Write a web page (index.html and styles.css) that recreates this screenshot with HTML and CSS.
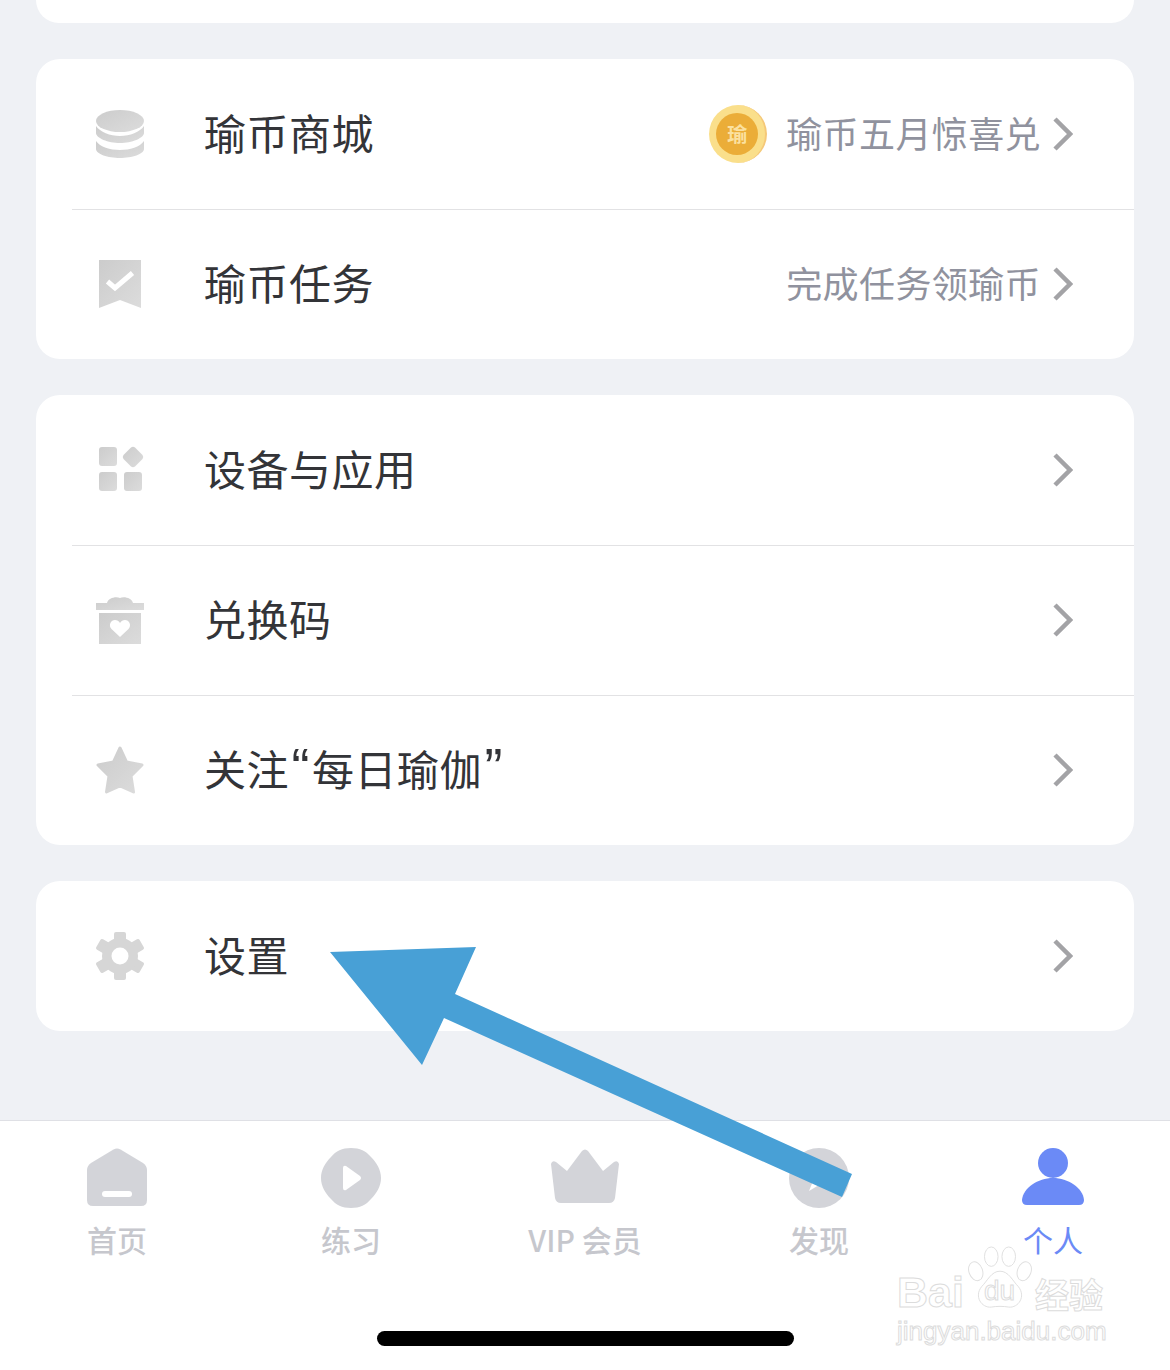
FILE: index.html
```html
<!DOCTYPE html>
<html lang="zh-CN">
<head>
    <meta charset="UTF-8">
    <meta name="viewport" content="width=device-width, initial-scale=1.0">
    <title>个人</title>
    <link rel="stylesheet" href="styles.css">
</head>
<body>
    <svg class="defs" width="0" height="0">
        <linearGradient id="iconFill" x1="0" y1="0" x2="1" y2="1">
            <stop offset="0" stop-color="#cccccc"/>
            <stop offset="1" stop-color="#dcdcdc"/>
        </linearGradient>
    </svg>

    <div class="page">
        <div class="card card-cut"></div>

        <div class="card">
            <div class="row">
                <svg class="icon" viewBox="0 0 48 48">
                    <ellipse cx="24" cy="11" rx="24" ry="11"/>
                    <path d="M0 16C4 22 14 26 24 26S44 22 48 16V23C48 28 36 33 24 33S0 28 0 23Z"/>
                    <path d="M0 31C4 37 14 40 24 40S44 37 48 31V39C48 44 36 48 24 48S0 44 0 39Z"/>
                </svg>
                <span class="label">瑜币商城</span>
                <span class="coin"><span class="coin-in">瑜</span></span>
                <span class="sub">瑜币五月惊喜兑</span>
                <svg class="arrow-r" viewBox="0 0 20 34"><path d="M2 2L17 17L2 32"/></svg>
            </div>
            <div class="row">
                <svg class="icon" viewBox="0 0 48 48">
                    <path d="M3 0H45V48L24 40L3 48Z"/>
                    <path class="cut-line" d="M11.500 21.500L19 28L36.500 13"/>
                </svg>
                <span class="label">瑜币任务</span>
                <span class="sub">完成任务领瑜币</span>
                <svg class="arrow-r" viewBox="0 0 20 34"><path d="M2 2L17 17L2 32"/></svg>
            </div>
        </div>

        <div class="card">
            <div class="row">
                <svg class="icon" viewBox="0 0 48 48">
                    <rect x="3" y="1" width="18" height="19" rx="3"/>
                    <rect x="3" y="26" width="18" height="19" rx="3"/>
                    <rect x="28" y="26" width="18" height="19" rx="3"/>
                    <path d="M35 1.500Q37 0 39 1.500L46.500 9Q48 11 46.500 13L39 20.500Q37 22 35 20.500L27.500 13Q26 11 27.500 9Z"/>
                </svg>
                <span class="label">设备与应用</span>
                <svg class="arrow-r" viewBox="0 0 20 34"><path d="M2 2L17 17L2 32"/></svg>
            </div>
            <div class="row">
                <svg class="icon" viewBox="0 0 48 48">
                    <path d="M11 7C12 2 20 0 24 2C28 0 36 2 37 7H48V14H0V7Z"/>
                    <path d="M3 17H45V48H3Z"/>
                    <path class="cut" d="M24 41L15.500 33C12 29 15 24 19 24C21 24 23 25 24 27C25 25 27 24 29 24C33 24 36 29 32.500 33Z"/>
                </svg>
                <span class="label">兑换码</span>
                <svg class="arrow-r" viewBox="0 0 20 34"><path d="M2 2L17 17L2 32"/></svg>
            </div>
            <div class="row">
                <svg class="icon" viewBox="0 0 48 48">
                    <path class="star" d="M24 2L30.500 16L46 19L35 30L37.500 46L24 40L10.500 46L13 30L2 19L17.500 16Z"/>
                </svg>
                <span class="label">关注<span class="quote">“</span>每日瑜伽<span class="quote">”</span></span>
                <svg class="arrow-r" viewBox="0 0 20 34"><path d="M2 2L17 17L2 32"/></svg>
            </div>
        </div>

        <div class="card">
            <div class="row">
                <svg class="icon icon-flat" viewBox="0 0 48 48">
                    <rect x="18" y="0" width="12" height="48" rx="2"/>
                    <g transform="rotate(60 24 24)"><rect x="18" y="-1" width="12" height="50" rx="2"/></g>
                    <g transform="rotate(120 24 24)"><rect x="18" y="-1" width="12" height="50" rx="2"/></g>
                    <circle cx="24" cy="24" r="18"/>
                    <circle class="cut" cx="24" cy="24" r="8.500"/>
                </svg>
                <span class="label">设置</span>
                <svg class="arrow-r" viewBox="0 0 20 34"><path d="M2 2L17 17L2 32"/></svg>
            </div>
        </div>

        <div class="tabbar">
            <div class="tab">
                <svg class="tab-icon" viewBox="0 0 62 60">
                    <path d="M27.500 1.500Q31 -0.500 34.500 1.500L57 15Q61 18 61 22V52Q61 58 55 58H7Q1 58 1 52V22Q1 18 5 15Z"/>
                    <rect class="cut" x="16" y="43" width="30" height="6" rx="3"/>
                </svg>
                <span class="tab-name">首页</span>
            </div>
            <div class="tab">
                <svg class="tab-icon" viewBox="0 0 62 60">
                    <path d="M31 0C40 0 46 3 51 9C57 15 61 22 61 30C61 38 57 45 51 51C46 57 40 60 31 60C22 60 16 57 11 51C5 45 1 38 1 30C1 22 5 15 11 9C16 3 22 0 31 0Z"/>
                    <path class="cut" d="M23 20Q23 17 26 18L40 28Q42 30 40 32L26 42Q23 43 23 40Z"/>
                </svg>
                <span class="tab-name">练习</span>
            </div>
            <div class="tab">
                <svg class="tab-icon tab-icon-wide" viewBox="0 0 70 60">
                    <path d="M32 3Q35 0 38 3L53 23L64 14Q68 12 69 16L65 50Q64 55 59 55H11Q6 55 5 50L1 16Q2 12 6 14L17 23Z"/>
                </svg>
                <span class="tab-name">VIP 会员</span>
            </div>
            <div class="tab">
                <svg class="tab-icon" viewBox="0 0 62 60">
                    <circle cx="31" cy="30" r="30"/>
                    <path class="cut" d="M21 43L27 28L44 18L36 34Z"/>
                </svg>
                <span class="tab-name">发现</span>
            </div>
            <div class="tab tab-on">
                <svg class="tab-icon" viewBox="0 0 62 60">
                    <circle cx="31" cy="15" r="15"/>
                    <path d="M31 30C46 30 61 40 62 52Q62 57 57 57H5Q0 57 0 52C1 40 16 30 31 30Z"/>
                </svg>
                <span class="tab-name">个人</span>
            </div>
            <div class="home-bar"></div>

            <!-- 水印 -->
            <div class="mark">
                <svg class="mark-paw" viewBox="0 0 66 66">
                    <ellipse cx="8" cy="26" rx="7" ry="10" transform="rotate(-20 8 26)"/>
                    <ellipse cx="24" cy="11" rx="7" ry="10"/>
                    <ellipse cx="42" cy="11" rx="7" ry="10"/>
                    <ellipse cx="58" cy="26" rx="7" ry="10" transform="rotate(20 58 26)"/>
                    <path d="M33 26C42 26 46 36 52 42C60 52 52 64 42 63C36 62 30 62 24 63C14 64 6 52 14 42C20 36 24 26 33 26Z"/>
                </svg>
                <span class="mark-bai">Bai</span>
                <span class="mark-du">du</span>
                <span class="mark-cn">经验</span>
                <span class="mark-url">jingyan.baidu.com</span>
            </div>
        </div>

        <svg class="pointer" viewBox="0 0 1170 1370">
            <polygon points="330,952 476,947 455,994 852,1174 842,1197 444,1018 422,1065"/>
        </svg>
    </div>
</body>
</html>
```

FILE: styles.css
```css
* { box-sizing: border-box; }
html, body { margin: 0; padding: 0; }
body { font-family: "Noto Sans CJK SC", "Liberation Sans", sans-serif; background: #eff1f5; }
.defs { position: absolute; }
.page { position: relative; width: 1170px; height: 1370px; overflow: hidden; display: flex; flex-direction: column; gap: 36px; padding: 0 36px; }

.card { background: #fff; border-radius: 24px; flex-shrink: 0; }
.card-cut { height: 23px; border-radius: 0 0 24px 24px; }

.row { position: relative; display: flex; align-items: center; height: 150px; padding: 0 61px 0 60px; }
.row + .row::before { content: ""; position: absolute; left: 36px; right: 0; top: 0; height: 1px; background: #e2e2e4; }

.icon { width: 48px; height: 48px; flex-shrink: 0; fill: url(#iconFill); }
.icon-flat { fill: #d6d6d6; }
.icon .cut { fill: #fff; }
.icon .cut-line { fill: none; stroke: #fff; stroke-width: 5; }
.icon .star { stroke: url(#iconFill); stroke-width: 3; stroke-linejoin: round; }

.label { margin: 0 0 4px 60px; font-size: 42px; letter-spacing: .5px; line-height: 60px; color: #333438; flex: 1; white-space: nowrap; }
.quote { padding: 0 2.500px; font-family: "Liberation Sans", sans-serif; font-size: 54px; line-height: 0; letter-spacing: 0; }
.sub { margin-bottom: 4px; font-size: 36px; letter-spacing: .4px; line-height: 50px; color: #90929e; white-space: nowrap; }
.arrow-r { width: 20px; height: 34px; margin-left: 12px; flex-shrink: 0; fill: none; stroke: #a3a3a6; stroke-width: 4.500; }

.coin { width: 58px; height: 58px; margin-right: 19px; border-radius: 50%; background: #fadf8b; border-right: 2px solid #f5c878; display: flex; align-items: center; justify-content: center; flex-shrink: 0; }
.coin-in { width: 42px; height: 42px; border-radius: 50%; background: #ebad38; color: #fbe1a0; font-size: 20px; font-weight: 700; line-height: 42px; text-align: center; }

.tabbar { position: relative; margin: 53px -36px 0; flex: 1; display: flex; background: #fff; border-top: 1px solid #dfe0e5; padding-top: 27px; }
.tab { width: 234px; display: flex; flex-direction: column; align-items: center; }
.tab-icon { width: 62px; height: 60px; fill: #d3d4d9; }
.tab-icon-wide { width: 70px; }
.tab-icon .cut { fill: #fff; }
.tab-name { margin-top: 10px; font-size: 30px; line-height: 42px; font-weight: 500; color: #c6c7cd; white-space: nowrap; }
.tab-on .tab-icon { fill: #6b8af6; }
.tab-on .tab-name { color: #6b8af6; font-weight: 400; }

.home-bar { position: absolute; left: 377px; top: 210px; width: 417px; height: 15px; border-radius: 8px; background: #000; }

/* 水印叠在 tabbar 右下角，只描边不填色 */
.mark { position: absolute; left: 896px; top: 124px; width: 214px; height: 102px; font-family: "Liberation Sans", "Noto Sans CJK SC", sans-serif; font-weight: 700; color: transparent; -webkit-text-stroke: 1px #dcdcdc; white-space: nowrap; }
.mark-paw { position: absolute; left: 72px; top: 0; width: 64px; height: 66px; fill: #fff; stroke: #dfdfdf; stroke-width: 1; }
.mark-bai { position: absolute; left: 1px; top: 22px; font-size: 43px; line-height: 50px; }
.mark-du { position: absolute; left: 88px; top: 26px; font-size: 28px; line-height: 40px; font-weight: 400; }
.mark-cn { position: absolute; left: 139px; top: 24px; font-size: 34px; line-height: 50px; font-family: "Noto Sans CJK SC", sans-serif; }
.mark-url { position: absolute; left: 1px; top: 70px; font-size: 26px; line-height: 32px; font-weight: 400; }

.pointer { position: absolute; left: 0; top: 0; width: 1170px; height: 1370px; fill: #48a0d6; }
```
